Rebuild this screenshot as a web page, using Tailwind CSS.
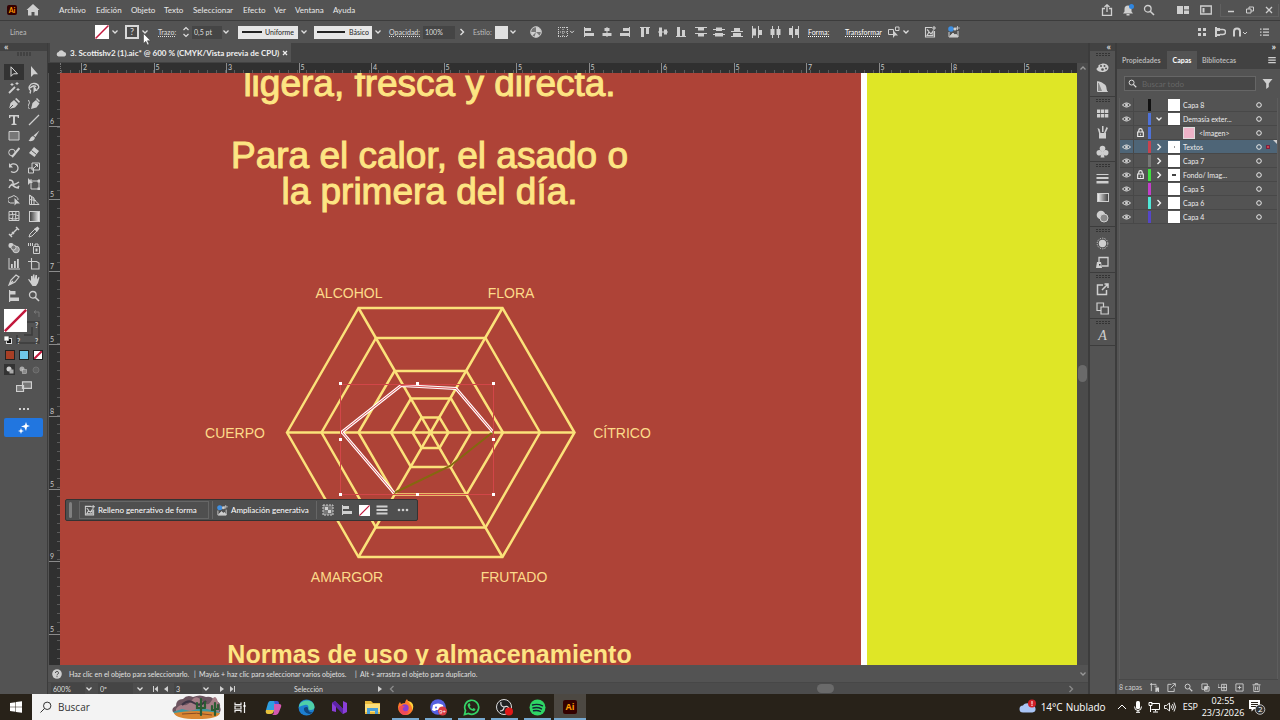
<!DOCTYPE html>
<html lang="es">
<head>
    <meta charset="UTF-8" />
    <meta name="viewport" content="width=device-width, initial-scale=1" />
    <title>3. Scottishv2 (1).aic - Illustrator</title>
    <script src="https://cdn.jsdelivr.net/npm/@tailwindcss/browser@4"></script>
</head>
<body class="h-screen flex flex-col overflow-hidden bg-[#535353] text-[#dedede] text-[8px] leading-3 font-['Lato','Open_Sans',sans-serif]">

<!-- Icon set -->
<svg class="hidden" xmlns="http://www.w3.org/2000/svg">
    <defs>
        <symbol id="chev" viewBox="0 0 8 8"><path d="M1.5 2.5L4 5l2.5-2.5" fill="none" stroke="currentColor" stroke-width="1.3"/></symbol>
        <symbol id="chev-r" viewBox="0 0 8 8"><path d="M2.5 1L5.5 4l-3 3" fill="none" stroke="currentColor" stroke-width="1.4"/></symbol>
        <symbol id="none" viewBox="0 0 14 14"><rect width="14" height="14" fill="#fff"/><path d="M0.5 13.5L13.5 0.5" stroke="#c2183c" stroke-width="1.5"/></symbol>
        <symbol id="al-l" viewBox="0 0 12 12"><path d="M1 1h1v10H1zM2 2h6v3H2zM2 7h9v3H2z"/></symbol>
        <symbol id="al-c" viewBox="0 0 12 12"><path d="M5.500 1h1v10h-1zM3.500 2h5v3h-5zM1.500 7h9v3h-9z"/></symbol>
        <symbol id="al-r" viewBox="0 0 12 12"><path d="M10 1h1v10h-1zM4 2h6v3H4zM1 7h9v3H1z"/></symbol>
        <symbol id="al-t" viewBox="0 0 12 12"><path d="M1 1h10v1H1zM2 2h3v9H2zM7 2h3v6H7z"/></symbol>
        <symbol id="al-m" viewBox="0 0 12 12"><path d="M1 5.500h10v1H1zM2 1.500h3v9H2zM7 3.500h3v5H7z"/></symbol>
        <symbol id="al-b" viewBox="0 0 12 12"><path d="M1 10h10v1H1zM2 1h3v9H2zM7 4h3v6H7z"/></symbol>
        <symbol id="di-t" viewBox="0 0 12 12"><path d="M0 1h12v1H0zM3 2h6v2.500H3zM0 7h12v1H0zM3 8h6v2.500H3z"/></symbol>
        <symbol id="di-m" viewBox="0 0 12 12"><path d="M0 3h12v1H0zM3 1.500h6v3.500H3zM0 8h12v1H0zM2 7h8v3.500H2z"/></symbol>
        <symbol id="di-b" viewBox="0 0 12 12"><path d="M0 5h12v1H0zM3 2h6v3H3zM0 10h12v1H0zM2 7h8v3H2z"/></symbol>
        <symbol id="di-l" viewBox="0 0 12 12"><path d="M1 0h1v12H1zM2 2.500h3v7H2zM7 0h1v12H7zM8 4h3v5H8z"/></symbol>
        <symbol id="di-c" viewBox="0 0 12 12"><path d="M3 0h1v12H3zM1.500 3h4v6h-4zM9 0h1v12H9zM7.500 3h4v6h-4z"/></symbol>
        <symbol id="di-r" viewBox="0 0 12 12"><path d="M5 0h1v12H5zM2 2h3v7H2zM11 0h1v12h-1zM8 3h3v6H8z"/></symbol>
        <symbol id="gen" viewBox="0 0 12 12"><path d="M8 1.500H1.500v9.500h9V5M3 9.500L5 6l2 2 2-3v4.500zM3 3.500l2 2M10 0v4M8 2h4" fill="none" stroke="currentColor" stroke-width="1.100"/></symbol>
        <symbol id="exp" viewBox="0 0 12 12"><circle cx="3" cy="3" r="2.800" fill="#3f8fe0"/><path d="M1 6v5h9V5" fill="none" stroke="currentColor"/><path d="M2 10l3-3 2 2 1-1 2 2.500H2zM6 2h2v2H6zM9.500 0v4M7.800 2h4" stroke="currentColor" stroke-width=".8"/></symbol>
        <symbol id="search" viewBox="0 0 12 12"><circle cx="4.800" cy="4.800" r="3.300" fill="none" stroke="currentColor" stroke-width="1.300"/><path d="M7.200 7.200L11 11" stroke="currentColor" stroke-width="1.600"/></symbol>
        <symbol id="eye" viewBox="0 0 10 8"><path d="M.5 4Q5-.5 9.500 4 5 8.500.5 4z" fill="none" stroke="currentColor"/><circle cx="5" cy="4" r="1.600"/></symbol>
        <symbol id="lock" viewBox="0 0 8 8"><path d="M1.500 3.500h5v4h-5zM2.500 3.500V2a1.500 1.500 0 0 1 3 0v1.500" fill="none" stroke="currentColor"/><path d="M3.500 5h1v1.500h-1z"/></symbol>
        <symbol id="ring" viewBox="0 0 8 8"><circle cx="4" cy="4" r="2.300" fill="none" stroke="currentColor"/></symbol>
        <symbol id="burger" viewBox="0 0 12 12"><path d="M.5 1.500h11v2H.5zM.5 5h11v2H.5zM.5 8.500h11v2H.5z"/></symbol>
        <symbol id="menu" viewBox="0 0 12 12"><path d="M1.500 2.500h9v1.300h-9zM1.500 5.500h9v1.300h-9zM1.500 8.500h9v1.300h-9z"/></symbol>
        <symbol id="pen" viewBox="0 0 12 12"><path d="M1 11l1.500-6L6 2l4 4-3 3.500zM7 1l1.500-1L12 3.500 11 5z"/><path d="M1 11l4-4" stroke="#535353"/></symbol>
        <symbol id="arrow" viewBox="0 0 12 12"><path d="M3 0v11l2.800-2.800H10z"/></symbol>
        <symbol id="grip" viewBox="0 0 16 4"><path d="M1 1h2M4 1h2M7 1h2M10 1h2M13 1h2M1 3h2M4 3h2M7 3h2M10 3h2M13 3h2" stroke="#333" /></symbol>
    </defs>
</svg>

<!-- Menu bar -->
<header class="h-[21px] shrink-0 flex items-center border-b border-[#3c3c3c]">
    <div class="ml-[7px] w-[10px] h-[10px] rounded-xs bg-[#330000] text-[#ff9a00] text-[7px] leading-[10px] font-bold text-center">Ai</div>
    <button class="ml-[9px]" aria-label="Inicio"><svg class="size-[14px] fill-[#cfcfcf]" viewBox="0 0 14 14"><path d="M7 1l6.500 6H12v5.500H8.500V9h-3v3.500H2V7H.5z"/></svg></button>
    <nav class="ml-[19px] flex gap-[9px] text-[#eaeaea]">
        <a href="#" class="w-[28px]">Archivo</a>
        <a href="#" class="w-[26px]">Edición</a>
        <a href="#" class="w-[24px]">Objeto</a>
        <a href="#" class="w-[20px]">Texto</a>
        <a href="#" class="w-[41px]">Seleccionar</a>
        <a href="#" class="w-[22px]">Efecto</a>
        <a href="#" class="w-[12px]">Ver</a>
        <a href="#" class="w-[29px]">Ventana</a>
        <a href="#" class="w-[24px]">Ayuda</a>
    </nav>
    <div class="ml-auto flex items-center text-[#cfcfcf] fill-current">
        <button class="w-[21px]" aria-label="Compartir"><svg class="size-3" viewBox="0 0 12 12"><path d="M4 4.500H1.500v7h9v-7H8M6 8V1M3.500 3L6 .8 8.500 3" fill="none" stroke="currentColor" stroke-width="1.300"/></svg></button>
        <button class="w-[21px]" aria-label="Notificaciones"><svg class="size-3" viewBox="0 0 12 12"><path d="M1 9.500l1.500-2V5a3.500 3.500 0 0 1 7 0v2.500l1.500 2zM4.500 10h3v1.500h-3z"/><circle cx="9.500" cy="2.500" r="2.500" fill="#2f86e0"/></svg></button>
        <button class="w-[34px]" aria-label="Buscar"><svg class="size-3"><use href="#search"/></svg></button>
        <button class="w-[23px]" aria-label="Organizar"><svg class="size-3" viewBox="0 0 12 12"><path d="M0 2h6v8H0zM7 2h5v3.500H7zM7 6.500h5V10H7z"/></svg></button>
        <button class="w-[20px]" aria-label="Espacio de trabajo"><svg class="size-3" viewBox="0 0 12 12"><path d="M.7 2h10.600v8H.7z" fill="none" stroke="currentColor" stroke-width="1.300"/><path d="M2.500 4h2v4.500h-2z"/></svg></button>
        <div class="flex items-center self-start h-[13px] mr-px border border-t-0 border-[#606060]">
            <button class="w-[19px] grid place-items-center" aria-label="Minimizar"><svg class="w-[8px] h-[8px]" viewBox="0 0 8 8"><path d="M1 5.500h6" stroke="currentColor" stroke-width="1.500"/></svg></button>
            <button class="w-[19px] grid place-items-center" aria-label="Restaurar"><svg class="w-[8px] h-[8px]" viewBox="0 0 8 8"><path d="M.5 3h4.500v4H.5zM3 3V1h4.500v4H5" fill="none" stroke="currentColor" stroke-width="1"/></svg></button>
            <button class="w-[19px] grid place-items-center" aria-label="Cerrar"><svg class="w-[8px] h-[8px]" viewBox="0 0 8 8"><path d="M1 1l6 6M7 1L1 7" stroke="currentColor" stroke-width="1.300"/></svg></button>
        </div>
    </div>
</header>

<!-- Control bar -->
<section class="relative h-[22px] shrink-0 flex items-center text-[7px] fill-[#cfcfcf] text-[#dedede] whitespace-nowrap">
    <span class="ml-[10px] w-[85px] text-[#bdbdbd]">Línea</span>
    <button aria-label="Relleno"><svg class="size-[14px]"><use href="#none"/></svg></button>
    <svg class="ml-[2px] size-2"><use href="#chev"/></svg>
    <button class="ml-[6px] size-[14px] border-2 border-[#d8d8d8] bg-[#4a4a4a] text-[9px] leading-[10px]" aria-label="Trazo">?</button>
    <svg class="ml-[2px] size-2"><use href="#chev"/></svg>
    <label for="stroke" class="ml-[9px] w-[24px] underline decoration-dotted">Trazo:</label>
    <svg class="w-[8px] h-[12px]" viewBox="0 0 8 12"><path d="M1.500 4L4 1.500 6.500 4M1.500 8L4 10.500 6.500 8" fill="none" stroke="currentColor" stroke-width="1.200"/></svg>
    <input id="stroke" type="text" value="0,5 pt" class="ml-[2px] w-[30px] h-[13px] pl-[2px] bg-[#454545]" />
    <svg class="size-2"><use href="#chev"/></svg>
    <div class="ml-[8px] w-[60px] h-[13px] flex items-center gap-[3px] px-[4px] bg-[#e6e6e6] text-[#222]">
        <span class="w-[22px] h-[2px] bg-[#222]"></span>
        <select aria-label="Perfil de anchura" class="flex-1 appearance-none"><option>Uniforme</option></select>
    </div>
    <svg class="ml-[2px] size-2"><use href="#chev"/></svg>
    <div class="ml-[6px] w-[58px] h-[13px] flex items-center gap-[4px] px-[3px] bg-[#e6e6e6] text-[#222]">
        <span class="w-[29px] h-[2px] bg-[#222]"></span>
        <select aria-label="Pincel" class="flex-1 appearance-none"><option>Básico</option></select>
    </div>
    <svg class="ml-[2px] size-2"><use href="#chev"/></svg>
    <label for="opacity" class="ml-[7px] w-[34px] underline decoration-dotted">Opacidad:</label>
    <input id="opacity" type="text" value="100%" class="w-[32px] h-[13px] pl-[2px] bg-[#454545]" />
    <svg class="ml-[3px] size-2"><use href="#chev-r"/></svg>
    <span class="ml-[7px] w-[22px] text-[#bdbdbd]">Estilo:</span>
    <button class="size-[13px] bg-[#e0e0e0]" aria-label="Estilo"></button>
    <svg class="ml-[1px] size-2"><use href="#chev"/></svg>
    <button class="ml-[13px]" aria-label="Volver a colorear"><svg class="size-3" viewBox="0 0 12 12"><circle cx="6" cy="6" r="5.300" fill="#777" stroke="#cfcfcf"/><path d="M6 6L6 1A5 5 0 0 1 11 6zM6 6L2.500 9.500A5 5 0 0 1 1 6zM6 6l3.500 3.500A5 5 0 0 1 4.500 11z" fill="#cfcfcf"/></svg></button>
    <button class="ml-[15px] flex items-center" aria-label="Alinear con"><svg class="size-3" viewBox="0 0 12 12"><path d="M1 1.500h10M1 10.500h10M1.500 1v10M10.500 1v10M6 1v10M1 6h10" stroke="#cfcfcf" stroke-dasharray="1 1" fill="none"/></svg><svg class="size-[6px]"><use href="#chev"/></svg></button>
    <div class="ml-[8px] flex gap-[6px]">
        <button aria-label="Alinear izquierda"><svg class="size-3"><use href="#al-l"/></svg></button>
        <button aria-label="Alinear centro"><svg class="size-3"><use href="#al-c"/></svg></button>
        <button aria-label="Alinear derecha"><svg class="size-3"><use href="#al-r"/></svg></button>
        <button class="ml-[2px]" aria-label="Alinear arriba"><svg class="size-3"><use href="#al-t"/></svg></button>
        <button aria-label="Alinear medio"><svg class="size-3"><use href="#al-m"/></svg></button>
        <button aria-label="Alinear abajo"><svg class="size-3"><use href="#al-b"/></svg></button>
        <button class="ml-[2px]" aria-label="Distribuir arriba"><svg class="size-3"><use href="#di-t"/></svg></button>
        <button aria-label="Distribuir medio"><svg class="size-3"><use href="#di-m"/></svg></button>
        <button aria-label="Distribuir abajo"><svg class="size-3"><use href="#di-b"/></svg></button>
        <button class="ml-[2px]" aria-label="Distribuir izquierda"><svg class="size-3"><use href="#di-l"/></svg></button>
        <button aria-label="Distribuir centro"><svg class="size-3"><use href="#di-c"/></svg></button>
        <button aria-label="Distribuir derecha"><svg class="size-3"><use href="#di-r"/></svg></button>
    </div>
    <button class="ml-[9px] w-[37px] text-left text-white underline decoration-dotted">Forma:</button>
    <button class="w-[43px] text-left text-white underline decoration-dotted">Transformar</button>
    <button class="flex items-center" aria-label="Aislar"><svg class="size-3" viewBox="0 0 12 12"><path d="M.5 3.500h5v5h-5zM7.500 1h3.500v3.500H7.500z" fill="none" stroke="#cfcfcf"/><path d="M5 4v8l2-2.500h3z"/></svg><svg class="ml-[2px] size-2"><use href="#chev"/></svg></button>
    <button class="ml-[14px] text-[#cfcfcf]" aria-label="Relleno generativo"><svg class="size-3"><use href="#gen"/></svg></button>
    <button class="ml-[12px] text-[#cfcfcf]" aria-label="Ampliación generativa"><svg class="size-3"><use href="#exp"/></svg></button>
    <div class="ml-auto mr-[10px] flex items-center gap-[6px] text-[#cfcfcf]">
        <svg class="size-3" viewBox="0 0 12 12"><path d="M2 2h3v3H2zM7 2h3v3H7zM2 7h3v3H2zM7 7h3v3H7z"/></svg>
        <svg class="size-3" viewBox="0 0 12 12"><path d="M1 1h2v10H1zM3 2h3v3H3zM3 8h3v2H3z"/><path d="M6 3.500h3a2 2 0 0 1 0 5H6" fill="none" stroke="#cfcfcf" stroke-width="1.400"/></svg>
        <svg class="w-[16px] h-[12px]" viewBox="0 0 16 12"><path d="M2 10.500V5.500a3 3 0 0 1 6 0v5" fill="none" stroke="#cfcfcf" stroke-width="2"/><path d="M11 6l2 2 2-2" fill="none" stroke="#cfcfcf"/></svg>
        <svg class="ml-[4px] size-3" viewBox="0 0 12 12"><path d="M2 2.500h1.500v1.300H2zM5 2.500h6v1.300H5zM2 5.500h1.500v1.300H2zM5 5.500h6v1.300H5zM2 8.500h1.500v1.300H2zM5 8.500h6v1.300H5z"/></svg>
    </div>
    <!-- Mouse pointer -->
    <svg class="absolute left-[143px] top-[12px] w-[8px] h-[13px] z-10" viewBox="0 0 8 13"><path d="M.5.5v10l2.300-2.200L4.500 12l1.600-.8-1.700-3.500h3.100z" fill="#fff" stroke="#333" stroke-width=".5"/></svg>
</section>

<div class="flex-1 min-h-0 flex">

    <!-- Tools -->
    <aside class="w-[48px] shrink-0 flex flex-col border-r border-[#3c3c3c] fill-[#cfcfcf] text-[#cfcfcf]">
        <div class="h-[8px] pl-[4px] bg-[#424242] text-[10px] leading-[6px] font-bold">«</div>
        <svg class="mt-[1px] mx-auto w-[16px] h-[4px]"><use href="#grip"/></svg>
        <div class="mt-[8px] ml-[4px] w-[40px] grid grid-cols-2 [&>button]:h-[16px] [&>button]:grid [&>button]:place-items-center [&_svg]:size-3">
            <button class="bg-[#333]"><svg viewBox="0 0 12 12"><path d="M3 .8v9.500l2.500-2.500h4z" fill="none" stroke="#ddd"/></svg></button>
            <button><svg><use href="#arrow"/></svg></button>
            <button><svg viewBox="0 0 12 12"><path d="M1 11l6-6" stroke="#cfcfcf" stroke-width="1.800"/><path d="M4 1v3M2.500 2.500h3M9 0v3M7.500 1.500h3M10 6v3M8.500 7.500h3" stroke="#cfcfcf"/></svg></button>
            <button><svg viewBox="0 0 12 12"><path d="M3 9C-1 6 2 1 6.500 1.500S12 6 9 7.500M3 9c-2 2 0 2 0 2M2 6c2-2 5-3 6-1" fill="none" stroke="#cfcfcf" stroke-width="1.300"/><path d="M5.500 3v8l1.700-2h2.500z"/></svg></button>
            <button><svg><use href="#pen"/></svg></button>
            <button><svg viewBox="0 0 12 12"><path d="M3 11l1.500-6L8 2l3.500 3.500-3 4zM8 1l1-1 3 3-1 1z"/><path d="M.5 2q2 3 0 5t1 4" fill="none" stroke="#cfcfcf"/></svg></button>
            <button><svg viewBox="0 0 12 12"><path d="M1 1h10v3h-1.200L9.500 2.500h-2.500v7l1.500.5v1h-5v-1L5 9.500v-7H2.500L2.200 4H1z"/></svg></button>
            <button><svg viewBox="0 0 12 12"><path d="M1 11L11 1" stroke="#cfcfcf" stroke-width="1.200"/></svg></button>
            <button><svg viewBox="0 0 12 12"><path d="M1 1.500h10v8.500H1z" fill="#777" stroke="#cfcfcf"/></svg></button>
            <button><svg viewBox="0 0 12 12"><path d="M11.500.5L7.500 7 5.500 5.500zM5 6l2 1.800C6.500 11 3 11.500.5 11 2 10 2 7 5 6z"/></svg></button>
            <button><svg viewBox="0 0 12 12"><circle cx="4" cy="6.500" r="3.300" fill="none" stroke="#cfcfcf"/><path d="M4 11L11.500 2" stroke="#cfcfcf" stroke-width="2"/></svg></button>
            <button><svg viewBox="0 0 12 12"><path d="M6 1l5 4-4.500 6L1 7z"/><path d="M3.500 4.500l5 4" stroke="#535353"/></svg></button>
            <button><svg viewBox="0 0 12 12"><path d="M2 4a4.300 4.300 0 1 1 1 5.500" fill="none" stroke="#cfcfcf" stroke-width="1.300"/><path d="M1 1v4.500h4z"/></svg></button>
            <button><svg viewBox="0 0 12 12"><path d="M4 1h7.500v7H4zM.5 6h5v5h-5zM6 6l3.500-3.500M7 2.500h2.500V5" fill="none" stroke="#cfcfcf"/></svg></button>
            <button><svg viewBox="0 0 12 12"><path d="M1 2q4 0 4 3t6-1M1 10q2-5 5-2t5 0M3 6q4 4 8 4" fill="none" stroke="#cfcfcf" stroke-width="1.500"/></svg></button>
            <button><svg viewBox="0 0 12 12"><path d="M3 3h8v8H3zM1 3h2V1M11 1v2" fill="none" stroke="#cfcfcf"/><path d="M0 0v7l2-2h3zM9.500 9.500H12V12H9.500zM9.500 2H12v2.500H9.500z"/></svg></button>
            <button><svg viewBox="0 0 12 12"><path d="M6 9H2.500A3 3 0 0 1 3 3q3-3 5.500 0 2 1 1.500 3" fill="none" stroke="#cfcfcf"/><path d="M6.500 4v7.500l2-2H12z"/></svg></button>
            <button><svg viewBox="0 0 12 12"><path d="M1.500 1v9.500H11zM1.500 1L6 4v6.500M1.500 5.500L8 6.500M3.500 2.500v8" fill="none" stroke="#cfcfcf"/></svg></button>
            <button><svg viewBox="0 0 12 12"><path d="M1 1.500h10v9H1zM1 5q5-2 10 1M1 8q5 2 10 0M4 1.500q2 4 0 9M8 1.500q-1 4 0 9" fill="none" stroke="#cfcfcf"/></svg></button>
            <button><span class="block size-[11px] border border-[#cfcfcf] bg-linear-to-r from-[#444] to-[#eee]"></span></button>
            <button><svg viewBox="0 0 12 12"><path d="M2 10l8-8M1 8l3 3M8 1l3 3M4 6l2 2" stroke="#cfcfcf" stroke-width="1.400"/></svg></button>
            <button><svg viewBox="0 0 12 12"><path d="M1 11l1-3 5-5 2 2-5 5z" fill="none" stroke="#cfcfcf"/><path d="M6 3l3 3 2.500-3.500L9.500.5z"/></svg></button>
            <button><svg viewBox="0 0 12 12"><rect x=".5" y="1" width="5" height="5" rx="2"/><circle cx="8" cy="7.500" r="3.300" fill="#999" stroke="#cfcfcf"/><circle cx="5.500" cy="5.500" r="2.500" fill="#777" stroke="#cfcfcf"/></svg></button>
            <button><svg viewBox="0 0 12 12"><path d="M5.500 4.500h6v7h-6zM7 2h3v2.500H7z" fill="none" stroke="#cfcfcf"/><path d="M0 1h1v3H0zM2 1h1v3H2zM4 1h1v3H4zM7.500 6.500h2v3h-2z"/></svg></button>
            <button><svg viewBox="0 0 12 12"><path d="M.5 0h1v10.500H12v1H.5zM3 6h1.800v4H3zM6 3h1.800v7H6zM9 1h1.800v9H9z"/></svg></button>
            <button><svg viewBox="0 0 12 12"><path d="M3.500 0v11H11V5L8.500 3.500H0" fill="none" stroke="#cfcfcf" stroke-width="1.100"/></svg></button>
            <button><svg viewBox="0 0 12 12"><path d="M1 11l2-5 5-5 3 2-4 5zM1 11l4-4" fill="none" stroke="#cfcfcf" stroke-width="1.200"/></svg></button>
            <button><svg viewBox="0 0 12 12"><path d="M0 5.500l1-.5 2 2V2h1.500v3L5 .5h1.500V5L7.500 1H9v4.500L10.500 3l1 .5L10 9l-2 3H4.500z"/></svg></button>
            <button><svg viewBox="0 0 12 12"><path d="M1 0h1.200v12H1zM2 1h5.500v3.500H2zM2 7.500h9V11H2z"/></svg></button>
            <button><svg><use href="#search"/></svg></button>
        </div>
        <!-- Fill / stroke -->
        <div class="relative mt-[4px] h-[38px]">
            <svg class="absolute left-[16px] top-[13px] w-[25px] h-[24px]" viewBox="0 0 25 24"><path d="M10 1h13v21H1v-8M8 14h8V6" fill="none" stroke="#3c3c3c" stroke-width="1.500"/></svg>
            <svg class="absolute left-[4px] top-[1px] size-[23px]" viewBox="0 0 14 14"><use href="#none"/></svg>
            <svg class="absolute left-[33px] top-[2px] w-[8px] h-[8px]" viewBox="0 0 8 8"><path d="M1 2h5v5M3 .5L1 2l2 1.500" fill="none" stroke="#777"/></svg>
            <svg class="absolute left-[4px] top-[28px] size-[8px]" viewBox="0 0 8 8"><rect x="2.500" y="2.500" width="5" height="5" fill="#111" stroke="#ddd"/><rect x="0" y="0" width="5" height="5" fill="#fff" stroke="#222" stroke-width=".6"/></svg>
            <span class="absolute left-[17px] top-[27px] text-[7px] font-bold">?</span>
            <span class="absolute left-[35px] top-[27px] text-[7px] font-bold">?</span>
            <span class="absolute left-[35px] top-[11px] text-[7px] font-bold">?</span>
        </div>
        <div class="mt-[4px] ml-[5px] flex gap-[4px]">
            <button class="size-[10px] bg-[#a83f25] border border-[#222]" aria-label="Color"></button>
            <button class="size-[10px] bg-[#6fc7ea] border border-[#222]" aria-label="Degradado"></button>
            <button class="size-[10px] border border-[#222]" aria-label="Ninguno"><svg class="size-full" viewBox="0 0 8 8"><rect width="8" height="8" fill="#fff"/><path d="M0 8L8 0" stroke="#c2183c" stroke-width="2"/></svg></button>
        </div>
        <div class="mt-[4px] ml-[4px] flex items-center gap-[2px]">
            <button class="size-[11px] bg-[#333] grid place-items-center"><svg class="size-[8px]" viewBox="0 0 8 8"><circle cx="3" cy="3" r="2.500"/><rect x="3.500" y="3.500" width="4" height="4" fill="#aaa"/></svg></button>
            <button class="size-[11px] grid place-items-center"><svg class="size-[8px]" viewBox="0 0 8 8"><circle cx="3" cy="3" r="2.500" fill="#aaa"/><rect x="3.500" y="3.500" width="4" height="4" fill="#888" stroke="#ccc" stroke-width=".5"/></svg></button>
            <button class="size-[11px] grid place-items-center"><svg class="size-[8px]" viewBox="0 0 8 8"><circle cx="4" cy="4" r="3" fill="#5f5f5f" stroke="#707070"/></svg></button>
        </div>
        <svg class="mt-[6px] mx-auto w-[16px] h-[12px]" viewBox="0 0 16 12"><path d="M.5 4.500h7v6h-7zM6.500.8h9v6.500h-9z" fill="#777" stroke="#cfcfcf" stroke-width="1.200"/></svg>
        <svg class="mt-[12px] mx-auto w-[10px] h-[8px]" viewBox="0 0 10 8"><path d="M0 3h2v2H0zM4 3h2v2H4zM8 3h2v2H8z"/></svg>
        <button class="mt-[5px] ml-[4px] w-[39px] h-[19px] rounded-xs bg-[#2176e0] grid place-items-center" aria-label="IA generativa">
            <svg class="size-3 fill-white" viewBox="0 0 12 12"><path d="M8 0l1 3 3 1-3 1-1 4-1.500-3.500L3 4.500 7 3zM3 6l.8 2.200L6 9l-2.200.8L3 12l-.8-2.200L0 9l2.200-.8z"/></svg>
        </button>
    </aside>

    <!-- Document -->
    <main class="flex-1 min-w-0 flex flex-col">
        <div class="h-[20px] shrink-0 bg-[#424242] flex">
            <div class="ml-[2px] w-[241px] h-[19px] pl-[6px] flex items-center bg-[#535353] text-[#f0f0f0] font-bold whitespace-nowrap">
                <svg class="mr-[3px] w-[11px] h-[8px] shrink-0 fill-[#cfcfcf]" viewBox="0 0 11 8"><path d="M2.500 7.500a2.300 2.300 0 0 1 0-4.500A3 3 0 0 1 8 3a2.300 2.300 0 0 1 .5 4.500z"/></svg>
                <span>3. Scottishv2 (1).aic* @ 600 % (CMYK/Vista previa de CPU)</span>
                <button class="ml-auto mr-[3px]" aria-label="Cerrar documento"><svg class="size-[6px]" viewBox="0 0 6 6"><path d="M1 1l4 4M5 1L1 5" stroke="#eee" stroke-width="1.300"/></svg></button>
            </div>
        </div>

        <div class="flex-1 min-h-0 flex">
            <div class="flex-1 min-w-0 flex flex-col">
                <!-- Horizontal ruler -->
                <div class="h-[10px] shrink-0 flex bg-[#303030] text-[7px] leading-[9px] text-[#c8c8c8] overflow-hidden">
                    <div class="ml-px w-[12px] shrink-0 border-r border-dotted border-[#777]"></div>
                    <div class="w-[20px] shrink-0 bg-[repeating-linear-gradient(90deg,#5c5c5c_0_1px,transparent_1px_9px)] bg-bottom bg-no-repeat bg-size-[100%_3px]"></div>
                    <div class="w-[1015px] shrink-0 grid grid-cols-14 [&>span]:pl-px [&>span]:border-l [&>span]:border-[#8a8a8a] bg-[repeating-linear-gradient(90deg,#5c5c5c_0_1px,transparent_1px_9px)] bg-bottom bg-no-repeat bg-size-[100%_3px]">
                        <span>2</span><span>5</span><span>3</span><span>5</span><span>4</span><span>5</span><span>5</span><span>5</span><span>6</span><span>5</span><span>7</span><span>5</span><span>8</span><span>5</span>
                    </div>
                </div>
                <div class="flex-1 min-h-0 flex">
                    <!-- Vertical ruler -->
                    <div class="w-[11px] ml-px shrink-0 overflow-hidden bg-[#303030] text-[7px] leading-[9px] text-[#c8c8c8] bg-[repeating-linear-gradient(#5c5c5c_0_1px,transparent_1px_9px)] bg-right bg-no-repeat bg-size-[3px_100%]">
                        <div class="h-[54px] flex items-end pl-px border-b border-[#8a8a8a]">6</div>
                        <div class="h-[580px] grid grid-rows-8 [&>div]:flex [&>div]:items-end [&>div]:pl-px [&>div]:border-b [&>div]:border-[#8a8a8a]">
                            <div>5</div><div>7</div><div>5</div><div>8</div><div>5</div><div>9</div><div>5</div><div></div>
                        </div>
                    </div>
                    <!-- Artboard -->
                    <div class="relative flex-1 min-w-0 flex overflow-hidden">
                        <div class="flex-1 min-w-0 pr-[62px] bg-[#ae4337] text-[#fde583] text-center font-['Liberation_Sans',Arial,sans-serif]">
                            <p class="-mt-[7px] text-[37px] leading-[36px] [-webkit-text-stroke:1px_#fde583]">ligera, fresca y directa.<br><br>Para el calor, el asado o<br>la primera del día.</p>
                            <svg class="mt-[68px] mx-auto w-[460px] h-[310px]" viewBox="200 278 460 310">
                                <g fill="none" stroke="#fbe27a" stroke-width="2.500">
                                    <path d="M287 432.500L358.500 308h144L574.500 432.500 502.500 557h-144z"/>
                                    <path d="M321.500 432.500L376 338h109.500L540 432.500 485.500 527.500H376z"/>
                                    <path d="M358.500 432.500L394.500 371h72L503 432.500 466.500 494.500h-72z"/>
                                    <path d="M391 432.500L411 398.500h40L471 432.500 451 467h-40z"/>
                                    <path d="M412.500 432.500L421.500 417.500h18L448.500 432.500 439.500 448h-18z"/>
                                    <path d="M287 432.500h287.500M358.500 308l144 249M502.500 308l-144 249"/>
                                </g>
                                <path d="M493 432L450 466 394 493" fill="none" stroke="#84680f" stroke-width="2"/>
                                <path d="M394 493L342 432 401 385.500 456 388.500 493 432" fill="none" stroke="#fff" stroke-width="3"/>
                                <path d="M394 493L342 432 401 385.500 456 388.500 493 432" fill="none" stroke="#d9585a" stroke-width="1"/>
                                <rect x="340.500" y="384.500" width="153" height="110" fill="none" stroke="#d24648" stroke-width="1"/>
                                <path d="M339 382h3v3h-3zM416 382h3v3h-3zM492 382h3v3h-3zM339 438h3v3h-3zM492 438h3v3h-3zM339 493h3v3h-3zM416 493h3v3h-3zM492 493h3v3h-3z" fill="#fff"/>
                                <g font-size="14" fill="#fddb8a" text-anchor="middle">
                                    <text x="349" y="298">ALCOHOL</text>
                                    <text x="511" y="298">FLORA</text>
                                    <text x="235" y="438">CUERPO</text>
                                    <text x="622" y="438">CÍTRICO</text>
                                    <text x="347" y="582">AMARGOR</text>
                                    <text x="514" y="582">FRUTADO</text>
                                </g>
                            </svg>
                            <h2 class="mt-[48px] text-[25px] leading-[36px] font-bold whitespace-nowrap">Normas de uso y almacenamiento</h2>
                        </div>
                        <div class="w-[6px] shrink-0 bg-white"></div>
                        <div class="w-[210px] shrink-0 bg-[#dfe626]"></div>

                        <!-- Contextual task bar -->
                        <div class="absolute left-[5px] top-[426px] w-[353px] h-[22px] flex items-center rounded-xs border border-[#333] bg-[#4f4f4f] fill-[#cfcfcf] text-white whitespace-nowrap">
                            <span class="ml-[3px] w-[3px] h-[16px] rounded-xs bg-[#808080]"></span>
                            <button class="ml-[7px] w-[130px] h-[18px] pl-[4px] flex items-center gap-[3px] border border-[#666]"><svg class="size-[11px] text-[#cfcfcf]"><use href="#gen"/></svg>Relleno generativo de forma</button>
                            <button class="ml-[3px] w-[105px] h-[18px] pl-[4px] flex items-center gap-[3px] border-x border-[#666]"><svg class="size-[11px] text-[#cfcfcf]"><use href="#exp"/></svg>Ampliación generativa</button>
                            <button class="ml-[5px]" aria-label="Agrupar"><svg class="size-3" viewBox="0 0 12 12"><path d="M1 1h10v10H1z" fill="#777" stroke="#cfcfcf" stroke-dasharray="2 1"/><path d="M3 3h3v3H3zM6 6h3v3H6z"/></svg></button>
                            <button class="ml-[7px]" aria-label="Alinear"><svg class="size-3"><use href="#al-l"/></svg></button>
                            <button class="ml-[6px]" aria-label="Relleno"><svg class="size-[11px]"><use href="#none"/></svg></button>
                            <button class="ml-[6px]" aria-label="Trazo"><svg class="size-3"><use href="#burger"/></svg></button>
                            <button class="ml-[9px]" aria-label="Más opciones"><svg class="size-3" viewBox="0 0 12 12"><circle cx="2" cy="6" r="1.300"/><circle cx="6" cy="6" r="1.300"/><circle cx="10" cy="6" r="1.300"/></svg></button>
                        </div>
                    </div>
                </div>
            </div>
            <!-- Vertical scrollbar -->
            <div class="w-[11px] shrink-0 flex flex-col items-center bg-[#4b4b4b] text-[#999]">
                <svg class="mt-[1px] size-2 rotate-180"><use href="#chev"/></svg>
                <div class="mt-[293px] w-[9px] h-[17px] rounded-full bg-[#6a6a6a]"></div>
            </div>
        </div>

        <!-- Hint bar -->
        <div class="h-[17px] shrink-0 flex items-center text-[7px] text-[#e0e0e0] whitespace-nowrap">
            <svg class="ml-[4px] mr-[7px] size-[10px]" viewBox="0 0 10 10"><circle cx="5" cy="5" r="4.800" fill="#cfcfcf"/><path d="M3.500 4a1.500 1.500 0 1 1 2 1.300q-.5.200-.5 1M5 7.200v1" stroke="#444" fill="none"/></svg>
            <p class="w-[125px]">Haz clic en el objeto para seleccionarlo.</p>
            <span class="w-[5px]">|</span>
            <p class="w-[156px]">Mayús + haz clic para seleccionar varios objetos.</p>
            <span class="w-[5px]">|</span>
            <p>Alt + arrastra el objeto para duplicarlo.</p>
            <svg class="ml-auto mr-[1px] size-2 text-[#999]"><use href="#chev"/></svg>
        </div>
        <!-- Status bar -->
        <div class="h-[12px] shrink-0 flex items-center text-[7px] bg-[#4c4c4c] fill-[#cfcfcf] border-t border-[#474747]">
            <input type="text" value="600%" aria-label="Zoom" class="ml-[3px] w-[34px] pl-[2px] bg-[#454545]" />
            <svg class="size-2"><use href="#chev"/></svg>
            <input type="text" value="0º" aria-label="Rotación" class="ml-[5px] w-[35px] pl-[2px] bg-[#454545]" />
            <svg class="ml-[3px] size-2"><use href="#chev"/></svg>
            <svg class="ml-[8px] w-[18px] h-[8px]" viewBox="0 0 18 8"><path d="M1 1h1v6H1zM6 1v6L2.500 4zM16 1v6l-4-3z"/></svg>
            <input type="text" value="3" aria-label="Mesa de trabajo" class="ml-[4px] w-[28px] pl-[2px] bg-[#454545]" />
            <svg class="size-2"><use href="#chev"/></svg>
            <svg class="ml-[8px] w-[18px] h-[8px]" viewBox="0 0 18 8"><path d="M2 1v6l4-3zM12 1v6l3.500-3zM16 1h1v6h-1z"/></svg>
            <span class="ml-[58px] w-[82px]">Selección</span>
            <svg class="size-2" viewBox="0 0 8 8"><path d="M2 1v6l4-3z"/></svg>
            <svg class="ml-[4px] size-2 rotate-180 text-[#888]"><use href="#chev-r"/></svg>
            <div class="ml-[421px] w-[17px] h-[9px] rounded-full bg-[#6a6a6a]"></div>
            <svg class="ml-auto mr-[13px] size-2 text-[#888]"><use href="#chev-r"/></svg>
        </div>
    </main>

    <!-- Collapsed panel dock -->
    <aside class="w-[29px] shrink-0 flex flex-col border-x-2 border-[#3c3c3c] fill-[#cfcfcf] text-[#cfcfcf] [&>div]:flex [&>div]:flex-col [&>div]:items-center [&>div]:border-b [&>div]:border-[#3c3c3c] [&_button]:h-[19px] [&_button]:grid [&_button]:place-items-center [&_button>svg]:size-[13px]">
        <p class="h-[8px] bg-[#424242] pr-[4px] text-right text-[10px] leading-[6px] font-bold">«</p>
        <div>
            <svg class="my-[1px] w-[16px] h-[5px]"><use href="#grip"/></svg>
            <button aria-label="Color"><svg viewBox="0 0 13 13"><path d="M6.500 2.500C10 2.500 12.500 4 12.500 6.500s-2.500 4.500-6 4.500S.5 9.500.5 8s2-1 2-2.500-1-1 4-3z"/><g fill="#535353"><circle cx="5" cy="5" r="1"/><circle cx="8.500" cy="5" r="1"/><circle cx="10" cy="7.500" r="1"/><circle cx="6.500" cy="8.500" r="1.300"/></g></svg></button>
            <button aria-label="Guía de color"><svg viewBox="0 0 13 13"><path d="M1.500 1.500v10h10z" fill="#888" stroke="#cfcfcf"/><path d="M2 1q9 2 9 10H6z"/></svg></button>
        </div>
        <div>
            <svg class="my-[1px] w-[16px] h-[5px]"><use href="#grip"/></svg>
            <button aria-label="Muestras"><svg viewBox="0 0 13 13"><path d="M1 2.500h3.300v3.500H1zM5 2.500h3.300v3.500H5zM9 2.500h3.300v3.500H9zM1 7h3.300v3.500H1zM5 7h3.300v3.500H5zM9 7h3.300v3.500H9z"/></svg></button>
            <button aria-label="Pinceles"><svg viewBox="0 0 13 13"><path d="M3 7h7v5.500H3zM1.500 2l2 1 1 4H3zM6 0h1.500v6H6zM10.500 1L12 2 9.500 7H8z"/></svg></button>
            <button aria-label="Símbolos"><svg viewBox="0 0 13 13"><circle cx="6.500" cy="3.500" r="2.800"/><circle cx="3.300" cy="7.800" r="2.800"/><circle cx="9.700" cy="7.800" r="2.800"/><path d="M6 6h1l1.500 6.500h-4z"/></svg></button>
        </div>
        <div>
            <svg class="my-[1px] w-[16px] h-[5px]"><use href="#grip"/></svg>
            <button aria-label="Trazo"><svg viewBox="0 0 13 13"><path d="M.5 2h12v1H.5zM.5 5h12v2H.5zM.5 9h12v2.500H.5z"/></svg></button>
            <button aria-label="Degradado"><span class="block w-[12px] h-[9px] border border-[#cfcfcf] bg-linear-to-r from-[#eee] to-[#444]"></span></button>
            <button aria-label="Transparencia"><svg viewBox="0 0 13 13"><circle cx="5" cy="5" r="4.300"/><circle cx="8" cy="8" r="4" fill="#8a8a8a" stroke="#cfcfcf"/></svg></button>
        </div>
        <div>
            <svg class="my-[1px] w-[16px] h-[5px]"><use href="#grip"/></svg>
            <button aria-label="Apariencia"><svg viewBox="0 0 13 13"><circle cx="6.500" cy="6.500" r="3.700"/><circle cx="6.500" cy="6.500" r="5.300" fill="none" stroke="#cfcfcf" stroke-dasharray="1.200 1.200"/></svg></button>
            <button aria-label="Estilos gráficos"><svg viewBox="0 0 13 13"><path d="M3 6V1.500h9V10H6" fill="none" stroke="#cfcfcf" stroke-width="1.300"/><path d="M1 6h4l1 6H0z"/><path d="M3 8h1.500v1.500H3z" fill="#333"/></svg></button>
        </div>
        <div>
            <svg class="my-[1px] w-[16px] h-[5px]"><use href="#grip"/></svg>
            <button aria-label="Exportar"><svg viewBox="0 0 13 13"><path d="M7 2H1.500v9.500h9V7M6 7l5.500-5.500M8.500 1H12v4" fill="none" stroke="#cfcfcf" stroke-width="1.500"/></svg></button>
            <button aria-label="Mesas de trabajo"><svg viewBox="0 0 13 13"><path d="M5 8.500H1V1h6.500v4M5 5h7.300v7H5z" fill="none" stroke="#cfcfcf" stroke-width="1.200"/></svg></button>
        </div>
        <div>
            <svg class="my-[1px] w-[16px] h-[5px]"><use href="#grip"/></svg>
            <button class="font-['Liberation_Serif',serif] italic text-[14px] leading-[19px]" aria-label="Glifos">A</button>
        </div>
    </aside>

    <!-- Layers panel -->
    <aside class="w-[163px] shrink-0 flex flex-col fill-[#cfcfcf]">
        <p class="h-[8px] bg-[#424242] pr-[4px] text-right text-[10px] leading-[6px] font-bold">»</p>
        <div class="h-[18px] flex items-center bg-[#424242] text-[7px] font-bold text-[#b5b5b5]">
            <button class="pl-[5px] w-[50px] text-left">Propiedades</button>
            <button class="w-[30px] h-full bg-[#535353] text-white">Capas</button>
            <button class="ml-[5px]">Bibliotecas</button>
            <button class="ml-auto mr-[3px]" aria-label="Menú"><svg class="size-[10px]"><use href="#menu"/></svg></button>
        </div>
        <div class="mt-[7px] ml-[7px] flex items-center">
            <div class="w-[132px] h-[15px] pl-[3px] flex items-center gap-[5px] border border-[#666] bg-[#474747]">
                <svg class="size-[9px]"><use href="#search"/></svg>
                <input type="search" placeholder="Buscar todo" aria-label="Buscar todo" class="w-[100px] placeholder:text-[#666]" />
            </div>
            <button class="ml-[6px]" aria-label="Filtrar"><svg class="size-[11px]" viewBox="0 0 11 11"><path d="M.5 1h10L6.800 5.500V9L4.200 11V5.500z"/></svg></button>
        </div>
        <ul class="mt-[7px] mx-[2px] [&>li]:h-[14px] [&>li]:flex [&>li]:items-center [&>li]:border-b [&>li]:border-[#484848] text-[7px] text-[#ececec] whitespace-nowrap flex-1 border-x border-[#5d5d5d]">
            <li><button class="w-[13px] pl-[2px]" aria-label="Visibilidad"><svg class="w-[9px] h-[8px]"><use href="#eye"/></svg></button><span class="w-[15px] h-full border-l border-[#484848]"></span><span class="w-[3px] h-[12px] bg-[#111]"></span><span class="w-[17px]"></span><span class="size-[12px] bg-white"></span><span class="ml-[3px] flex-1">Capa 8</span><svg class="mr-[14px] size-2"><use href="#ring"/></svg></li>
            <li><button class="w-[13px] pl-[2px]" aria-label="Visibilidad"><svg class="w-[9px] h-[8px]"><use href="#eye"/></svg></button><span class="w-[15px] h-full border-l border-[#484848]"></span><span class="w-[3px] h-[12px] bg-[#4f72d8]"></span><span class="w-[17px] pl-[4px]"><svg class="size-2"><use href="#chev"/></svg></span><span class="size-[12px] bg-white"></span><span class="ml-[3px] flex-1">Demasía exter...</span><svg class="mr-[14px] size-2"><use href="#ring"/></svg></li>
            <li><span class="w-[13px]"></span><span class="w-[15px] h-full pl-[2px] flex items-center border-l border-[#484848]"><svg class="size-[9px]"><use href="#lock"/></svg></span><span class="w-[3px] h-[12px] bg-[#4f72d8]"></span><span class="w-[32px]"></span><span class="size-[12px] bg-[#eeb3c8] border border-[#ddd]"></span><span class="ml-[4px] flex-1">&lt;Imagen&gt;</span><svg class="mr-[14px] size-2"><use href="#ring"/></svg></li>
            <li class="relative bg-[#4e6577]"><button class="w-[13px] pl-[2px]" aria-label="Visibilidad"><svg class="w-[9px] h-[8px]"><use href="#eye"/></svg></button><span class="w-[15px] h-full border-l border-[#484848]"></span><span class="w-[3px] h-[12px] bg-[#c8434f]"></span><span class="w-[17px] pl-[4px]"><svg class="size-2"><use href="#chev-r"/></svg></span><span class="size-[12px] bg-white grid place-items-center"><span class="w-px h-[2px] bg-[#999]"></span></span><span class="ml-[3px] flex-1">Textos</span><svg class="mr-[3px] size-2"><use href="#ring"/></svg><span class="mr-[7px] size-[4px] border border-[#7a2340] bg-[#c8434f]"></span><svg class="absolute right-0 top-0 size-[4px]" viewBox="0 0 4 4"><path d="M0 0h4v4z"/></svg></li>
            <li><button class="w-[13px] pl-[2px]" aria-label="Visibilidad"><svg class="w-[9px] h-[8px]"><use href="#eye"/></svg></button><span class="w-[15px] h-full border-l border-[#484848]"></span><span class="w-[3px] h-[12px] bg-[#777]"></span><span class="w-[17px] pl-[4px]"><svg class="size-2"><use href="#chev-r"/></svg></span><span class="size-[12px] bg-white"></span><span class="ml-[3px] flex-1">Capa 7</span><svg class="mr-[14px] size-2"><use href="#ring"/></svg></li>
            <li><button class="w-[13px] pl-[2px]" aria-label="Visibilidad"><svg class="w-[9px] h-[8px]"><use href="#eye"/></svg></button><span class="w-[15px] h-full pl-[2px] flex items-center border-l border-[#484848]"><svg class="size-[9px]"><use href="#lock"/></svg></span><span class="w-[3px] h-[12px] bg-[#3fe03f]"></span><span class="w-[17px] pl-[4px]"><svg class="size-2"><use href="#chev-r"/></svg></span><span class="size-[12px] bg-white grid place-items-center"><span class="w-[4px] h-[2px] bg-[#444]"></span></span><span class="ml-[3px] flex-1">Fondo/ Imag...</span><svg class="mr-[14px] size-2"><use href="#ring"/></svg></li>
            <li><button class="w-[13px] pl-[2px]" aria-label="Visibilidad"><svg class="w-[9px] h-[8px]"><use href="#eye"/></svg></button><span class="w-[15px] h-full border-l border-[#484848]"></span><span class="w-[3px] h-[12px] bg-[#c23fc8]"></span><span class="w-[17px]"></span><span class="size-[12px] bg-white"></span><span class="ml-[3px] flex-1">Capa 5</span><svg class="mr-[14px] size-2"><use href="#ring"/></svg></li>
            <li><button class="w-[13px] pl-[2px]" aria-label="Visibilidad"><svg class="w-[9px] h-[8px]"><use href="#eye"/></svg></button><span class="w-[15px] h-full border-l border-[#484848]"></span><span class="w-[3px] h-[12px] bg-[#4fe8d8]"></span><span class="w-[17px] pl-[4px]"><svg class="size-2"><use href="#chev-r"/></svg></span><span class="size-[12px] bg-white"></span><span class="ml-[3px] flex-1">Capa 6</span><svg class="mr-[14px] size-2"><use href="#ring"/></svg></li>
            <li><button class="w-[13px] pl-[2px]" aria-label="Visibilidad"><svg class="w-[9px] h-[8px]"><use href="#eye"/></svg></button><span class="w-[15px] h-full border-l border-[#484848]"></span><span class="w-[3px] h-[12px] bg-[#5546c8]"></span><span class="w-[17px]"></span><span class="size-[12px] bg-white"></span><span class="ml-[3px] flex-1">Capa 4</span><svg class="mr-[14px] size-2"><use href="#ring"/></svg></li>
        </ul>
        <div class="h-[15px] mx-[2px] flex items-center border-t border-[#484848] text-[7px] text-[#cfcfcf] [&_svg]:size-[9px]">
            <span class="w-[31px]">8 capas</span>
            <div class="flex gap-[8px]">
                <button aria-label="Recopilar"><svg viewBox="0 0 10 10"><path d="M0 1.500h7M1.500 0v9M5 3.500h3" stroke="currentColor"/><path d="M6 5h4v5H8.500V8.500h-1V10H6z"/></svg></button>
                <button aria-label="Exportar"><svg viewBox="0 0 10 10"><path d="M5 1.500H1v8h7V6M4 6l5-5M6 .7h3.300V4" fill="none" stroke="currentColor"/></svg></button>
                <button aria-label="Localizar"><svg><use href="#search"/></svg></button>
                <button aria-label="Máscara"><svg viewBox="0 0 10 10"><path d="M1 1h6v6H1zM4 4h5v5H4z" fill="none" stroke="currentColor"/><path d="M4 4h3v3H4z"/></svg></button>
                <button aria-label="Subcapa"><svg viewBox="0 0 10 10"><path d="M0 1v4h3M4 1.500h5.500v7H4zM4 5h5.500M6.700 2v6" fill="none" stroke="currentColor"/></svg></button>
                <button aria-label="Nueva capa"><svg viewBox="0 0 10 10"><path d="M1 1h8v8H1zM5 3v4M3 5h4" fill="none" stroke="currentColor"/></svg></button>
                <button aria-label="Eliminar"><svg viewBox="0 0 10 10"><path d="M.5 2h9M3.500 2V.7h3V2M2 2.500V9.500h6v-7M4 4v4M6 4v4" fill="none" stroke="currentColor"/></svg></button>
            </div>
        </div>
    </aside>
</div>

<!-- Windows taskbar -->
<footer class="h-[26px] shrink-0 flex items-center bg-[#282219] text-white font-['Open_Sans','Noto_Sans',sans-serif]">
    <button class="w-[32px] grid place-items-center" aria-label="Inicio"><svg class="size-[12px] fill-white" viewBox="0 0 12 12"><path d="M0 2l5.500-.8v4.500H0zM6 1.100L12 .2v5.500H6zM0 6.300h5.500v4.500L0 10zM6 6.300h6v5.500l-6-.9z"/></svg></button>
    <label class="w-[192px] h-full pl-[8px] flex items-center bg-[#f3f3f3] text-[#333]">
        <svg class="size-[12px] -scale-x-100 text-[#333]" viewBox="0 0 12 12"><circle cx="4.800" cy="4.800" r="3.700" fill="none" stroke="currentColor"/><path d="M7.500 7.500L11.500 11.500" stroke="currentColor"/></svg>
        <input type="search" placeholder="Buscar" aria-label="Buscar" class="ml-[6px] w-[114px] text-[10px] placeholder:text-[#333]" />
        <svg class="w-[50px] h-[24px]" viewBox="0 0 50 24">
            <path d="M1 17Q-1 13 4 11 4 4 11 4 15-1 21 2q7-3 13 0 7-1 8 4 7 0 6 6 2 5-2 6z" fill="#6c5560"/>
            <path d="M4 14q4-5 8-4t8-5 10 1 10-1 7 6v7H4z" fill="#a67d86"/>
            <path d="M10 10q6-6 12-2t12-2" fill="none" stroke="#3d3444" stroke-width="2"/>
            <path d="M1 17l9-3 8 2 12-3 18 4-3 3H4z" fill="#3f97a0"/>
            <path d="M2 18q22-4 46 0-2 6-23 6T2 18z" fill="#d98632"/>
            <path d="M10 19q14-2 30 1" stroke="#8a4b23" fill="none"/>
            <path d="M29 20V4M25 8v5h8M33 7v6M43 20V8M40 11v4h3M46 10v4h-3" fill="none" stroke="#2b5c33" stroke-width="2.200" stroke-linecap="round"/>
        </svg>
    </label>
    <nav class="h-full flex [&>button]:w-[27px] [&>button]:mx-[3px] [&>button]:h-full [&>button]:grid [&>button]:place-items-center [&>button]:border-y-2 [&>button]:border-transparent [&_svg]:size-[17px]">
        <button aria-label="Vista de tareas"><svg viewBox="0 0 17 17"><path d="M3 3.500v2h6v-2M3 13.500v-2h6v2M3 7h6v3H3zM12.500 3v11" fill="none" stroke="#eee" stroke-width="1.200"/><path d="M11.500 6h2v2h-2z" fill="#fff"/></svg></button>
        <button aria-label="Copilot"><svg viewBox="0 0 17 17"><path d="M5 2h5q2 0 1 3L9 12q-1 2-3 2H3q-3 0-2-3l2-7q1-2 2-2z" fill="#2f9fe0"/><path d="M9 5h5q3 0 2 3l-2 5q-1 3-3 3H7q2-1 2-4z" fill="#d458b0"/><path d="M1 11h8l-1 3q-1 1-3 1H3q-3 0-2-4z" fill="#e8c23c"/><path d="M9 2h3q2 0 2 3H10z" fill="#3c55d8"/></svg></button>
        <button aria-label="Edge"><svg viewBox="0 0 17 17"><circle cx="8.500" cy="8.500" r="8" fill="#1d7fd0"/><path d="M1 8C1 0 16-1 16.500 8q0 3-4 3-3 0-2-2 0-4-4-3T1 8z" fill="#4fd0a8"/><path d="M6 9q-1 4 5 6 3 0 4-2-5 1-5-4-1-2-4 0z" fill="#10477f"/></svg></button>
        <button aria-label="Visual Studio"><svg viewBox="0 0 17 17"><path d="M1 4l3-2 8 8V2l4 2v9l-4 2-7-8v6l-4-1z" fill="#8a3fd8"/><path d="M1 4l3-2 8 8v5L4 7z" fill="#5c22a8"/></svg></button>
        <button aria-label="Explorador"><svg viewBox="0 0 17 17"><path d="M1 2h6l2 2h7v11H1z" fill="#e8b93c"/><path d="M1 5h15v8H1z" fill="#fbdf7a"/><path d="M3 9h11v6h-3v-3H6v3H3z" fill="#4a9fd8"/></svg></button>
        <button class="border-b-[#76a9d0]!" aria-label="Firefox"><svg viewBox="0 0 17 17"><path d="M1 8q0-3 2-5l1 2q2-1 4-1 0-2 2-4 0 2 3 4 3 2 3 5a7.500 7.500 0 0 1-15-1z" fill="#ff7a2a"/><path d="M9 1q3 2 4 4 3 3 2 7 3-6-1-9-3-1-5-2z" fill="#ffd23c"/><circle cx="8" cy="9" r="3.700" fill="#8a3fd0"/><path d="M2 8q3-3 6 0-3 0-2 3 3 3 7 0-2 5-6 5-5-1-5-8z" fill="#f04a58"/></svg></button>
        <button class="border-b-[#76a9d0]!" aria-label="Discord"><svg viewBox="0 0 17 17"><circle cx="8" cy="8" r="7.800" fill="#5560e0"/><path d="M3 6q5-3 10 0l1 5q-3 2-4 0H6q-1 2-4 0z" fill="#fff"/><circle cx="6" cy="8.500" r="1" fill="#5560e0"/><circle cx="12.500" cy="12" r="4.500" fill="#d83a42"/><text x="9" y="14.500" font-size="6" fill="#fff">9+</text></svg></button>
        <button class="border-b-[#76a9d0]!" aria-label="WhatsApp"><svg viewBox="0 0 17 17"><path d="M1.500 15.500l1-4a7 7 0 1 1 3 3z" fill="none" stroke="#35d366" stroke-width="1.700"/><path d="M5.500 4.500q1-1 1.500.500l.5 1.500-.8 1q1 2 2.800 2.500l1-1 2 1q0 2-2 2-5-1-6-6z" fill="#35d366"/></svg></button>
        <button class="border-b-[#76a9d0]!" aria-label="OBS"><svg viewBox="0 0 17 17"><circle cx="8" cy="8" r="7.500" fill="#222" stroke="#ddd"/><path d="M8 8q-4-1-3-5M8 8q4-2 5 2M8 8q0 4-4 4" fill="none" stroke="#ddd" stroke-width="1.200"/><circle cx="13" cy="12.500" r="4" fill="#e01818"/></svg></button>
        <button class="border-b-[#76a9d0]!" aria-label="Spotify"><svg viewBox="0 0 17 17"><circle cx="8.500" cy="8.500" r="8" fill="#2fd565"/><path d="M3.500 6q5-1.500 10 .8M4 9q4.500-1.300 8.500.8M4.500 11.800q4-1 7 .700" fill="none" stroke="#123" stroke-width="1.400" stroke-linecap="round"/></svg></button>
        <button class="w-[32px]! mx-0! bg-[#4c4842] border-b-[#76a9d0]!" aria-label="Illustrator"><span class="block size-[14px] rounded-xs bg-[#330000] text-[#ff9a00] text-[9px] leading-[14px] font-bold">Ai</span></button>
    </nav>
    <div class="ml-auto flex items-center fill-white text-[10px] leading-3 whitespace-nowrap">
        <svg class="w-[18px] h-[16px]" viewBox="0 0 18 16"><path d="M4 13.500a3.500 3.500 0 0 1 0-7 5 5 0 0 1 8.500 0 3.500 3.500 0 0 1 1 7z" fill="#a9c4f5"/><circle cx="13" cy="4.500" r="4" fill="#d01f28"/><path d="M12.500 2h1v3.500h-1zM12.500 6h1v1h-1z"/></svg>
        <span class="ml-[4px] w-[25px]">14°C</span>
        <span class="w-[51px]">Nublado</span>
        <svg class="w-[10px] h-[10px]" viewBox="0 0 10 10"><path d="M1 7l4-4 4 4" fill="none" stroke="#fff"/></svg>
        <svg class="ml-[6px] w-[10px] h-[12px]" viewBox="0 0 10 12"><rect x="3" y="0" width="4" height="8" rx="1.500"/><path d="M1.500 5.500q0 4 3.500 4t3.500-4M5 9v2M3 11.300h4" fill="none" stroke="#fff"/></svg>
        <svg class="ml-[5px] w-[12px] h-[12px]" viewBox="0 0 12 12"><path d="M3.500 2.500h8v6h-8M7.500 8.500v2M5 11h5M1 1.500h3v3H1zM2.500 4.500V11" fill="none" stroke="#fff"/></svg>
        <svg class="ml-[4px] w-[12px] h-[12px]" viewBox="0 0 12 12"><path d="M.5 4.500h2l3-2.500v8l-3-2.500h-2zM7 4.500q1 1.500 0 3M8.500 3q2 3 0 6M10 1.500q3 4.500 0 9" fill="none" stroke="#fff" stroke-width=".9"/></svg>
        <span class="ml-[7px] text-[9px]">ESP</span>
        <div class="ml-[2px] w-[46px] text-center text-[9px]">02:55<br>23/3/2026</div>
        <svg class="ml-[2px] mr-[14px] w-[18px] h-[16px]" viewBox="0 0 18 16"><path d="M1 1h11v9H6l-2.500 2.500V10H1z"/><path d="M3 3.500h7M3 5.500h7M3 7.500h5" stroke="#282219"/><circle cx="12" cy="10.500" r="4.800" fill="#333" stroke="#ddd" stroke-width=".8"/><text x="10" y="13.300" font-size="8">2</text></svg>
    </div>
</footer>

</body>
</html>
